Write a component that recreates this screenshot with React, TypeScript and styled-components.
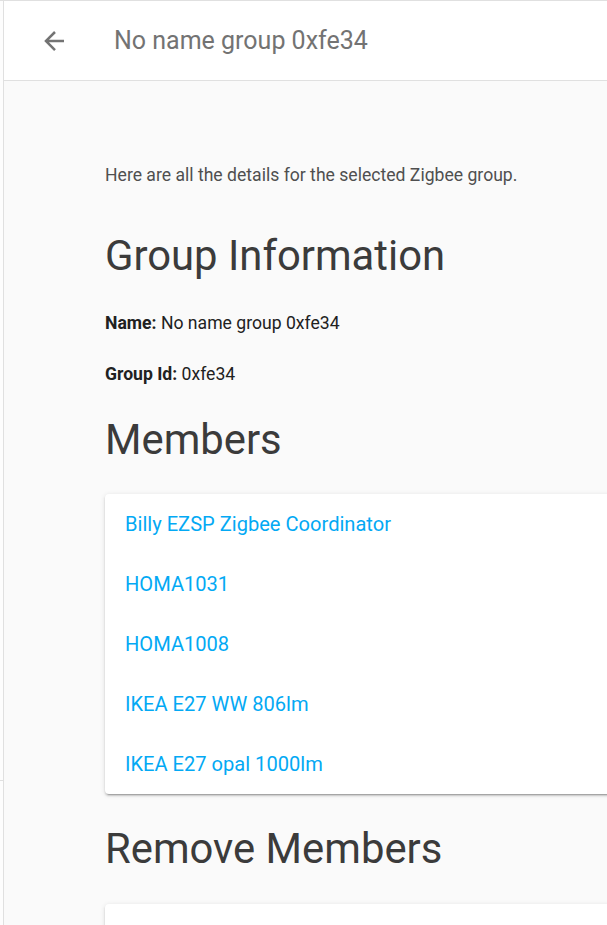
import React from "react";
import styled, { createGlobalStyle } from "styled-components";

const Global = createGlobalStyle`
  html, body { margin: 0; padding: 0; background: #fafafa; }
  body { font-family: Roboto, "Noto Sans", sans-serif; overflow: hidden; }
  * { box-sizing: border-box; }
`;

const Page = styled.div`
  display: flex;
  width: 607px;
  height: 925px;
  overflow: hidden;
  border-top: 1px solid #e0e0e0;
`;

const Sidebar = styled.div`
  width: 4px;
  flex: none;
  background: #fdfdfd;
  border-right: 1px solid #e0e0e0;
`;

const SidebarTop = styled.div`
  height: 780px;
  border-bottom: 1px solid #e0e0e0;
`;

const Main = styled.div`
  flex: 1;
  min-width: 0;
  display: flex;
  flex-direction: column;
`;

const Header = styled.header`
  height: 80px;
  flex: none;
  display: flex;
  align-items: center;
  background: #fff;
  border-bottom: 1px solid #e0e0e0;
  padding-left: 23px;
`;

const BackButton = styled.button`
  width: 54px;
  height: 54px;
  border: none;
  background: none;
  padding: 0;
  display: flex;
  align-items: center;
  justify-content: center;
  color: #737373;
`;

const Title = styled.div`
  margin-left: 33px;
  font-size: 25px;
  color: #737373;
  white-space: nowrap;
`;

const Content = styled.div`
  padding: 81px 0 0 101px;
  white-space: nowrap;
`;

const Intro = styled.p`
  margin: 0;
  font-size: 17.6px;
  line-height: 26px;
  color: #4f4f4f;
`;

const SectionHeading = styled.h2<{ $top: number }>`
  margin: ${(p) => p.$top}px 0 0;
  font-size: 41.8px;
  font-weight: 400;
  line-height: 52px;
  color: #3b3b3b;
`;

const InfoLine = styled.p<{ $top: number }>`
  margin: ${(p) => p.$top}px 0 0;
  font-size: 17.6px;
  line-height: 26px;
  color: #212121;
  b { font-weight: 700; }
`;

const Card = styled.div<{ $top: number }>`
  margin-top: ${(p) => p.$top}px;
  background: #fff;
  border-radius: 4px 0 0 4px;
  box-shadow: 0 2px 2px 0 rgba(0, 0, 0, 0.14), 0 1px 5px 0 rgba(0, 0, 0, 0.12),
    0 3px 1px -2px rgba(0, 0, 0, 0.2);
  margin-right: -10px;
`;

const MemberRow = styled.a`
  display: flex;
  align-items: center;
  height: 60px;
  padding-left: 20px;
  font-size: 20.1px;
  color: #03a9f4;
  text-decoration: none;
`;

const EmptyCard = styled(Card)`
  height: 60px;
`;

const members = [
  "Billy EZSP Zigbee Coordinator",
  "HOMA1031",
  "HOMA1008",
  "IKEA E27 WW 806lm",
  "IKEA E27 opal 1000lm",
];

export default function App() {
  return (
    <>
      <Global />
      <Page>
        <Sidebar>
          <SidebarTop />
        </Sidebar>
        <Main>
          <Header>
            <BackButton aria-label="Back">
              <svg width="30" height="30" viewBox="0 0 24 24">
                <path
                  fill="currentColor"
                  d="M20,11V13H8L13.5,18.5L12.08,19.92L4.16,12L12.08,4.08L13.5,5.5L8,11H20Z"
                />
              </svg>
            </BackButton>
            <Title>No name group 0xfe34</Title>
          </Header>
          <Content>
            <Intro>Here are all the details for the selected Zigbee group.</Intro>
            <SectionHeading $top={42}>Group Information</SectionHeading>
            <InfoLine $top={28}>
              <b>Name:</b> No name group 0xfe34
            </InfoLine>
            <InfoLine $top={25}>
              <b>Group Id:</b> 0xfe34
            </InfoLine>
            <SectionHeading $top={27}>Members</SectionHeading>
            <Card $top={28}>
              {members.map((m) => (
                <MemberRow key={m} href="#">
                  {m}
                </MemberRow>
              ))}
            </Card>
            <SectionHeading $top={29}>Remove Members</SectionHeading>
            <EmptyCard $top={29} />
          </Content>
        </Main>
      </Page>
    </>
  );
}
